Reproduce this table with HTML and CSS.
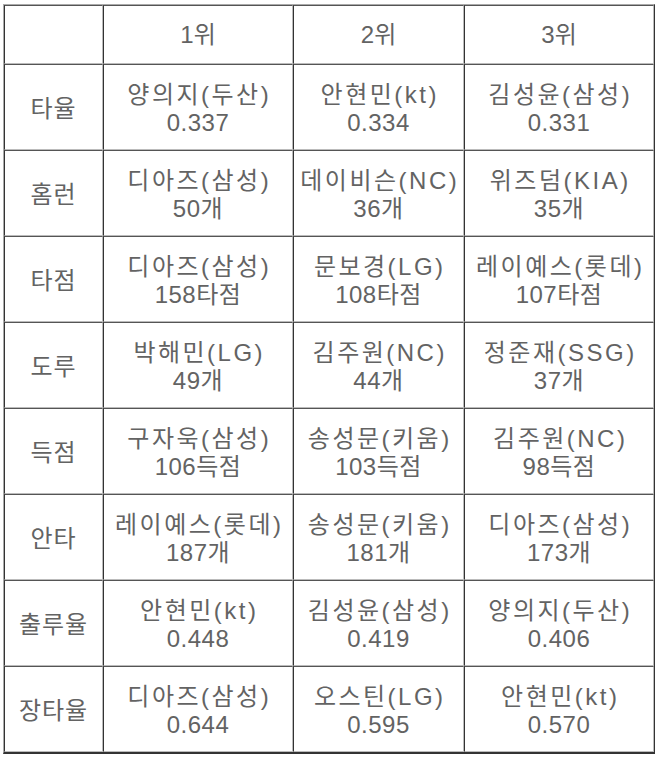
FILE: index.html
```html
<!DOCTYPE html>
<html lang="ko">
<head>
<meta charset="utf-8">
<link rel="stylesheet" href="styles.css">
</head>
<body>
<table class="rank">
  <colgroup>
    <col class="c-label"><col class="c-1"><col class="c-2"><col class="c-3">
  </colgroup>
  <tr class="head"><td></td><td>1위</td><td>2위</td><td>3위</td></tr>
  <tr><td class="lb">타율</td><td><span class="nm">양의지(두산)</span><span class="vl">0.337</span></td><td><span class="nm">안현민(kt)</span><span class="vl">0.334</span></td><td><span class="nm">김성윤(삼성)</span><span class="vl">0.331</span></td></tr>
  <tr><td class="lb">홈런</td><td><span class="nm">디아즈(삼성)</span><span class="vl">50개</span></td><td><span class="nm">데이비슨(NC)</span><span class="vl">36개</span></td><td><span class="nm">위즈덤(KIA)</span><span class="vl">35개</span></td></tr>
  <tr><td class="lb">타점</td><td><span class="nm">디아즈(삼성)</span><span class="vl">158타점</span></td><td><span class="nm">문보경(LG)</span><span class="vl">108타점</span></td><td><span class="nm">레이예스(롯데)</span><span class="vl">107타점</span></td></tr>
  <tr><td class="lb">도루</td><td><span class="nm">박해민(LG)</span><span class="vl">49개</span></td><td><span class="nm">김주원(NC)</span><span class="vl">44개</span></td><td><span class="nm">정준재(SSG)</span><span class="vl">37개</span></td></tr>
  <tr><td class="lb">득점</td><td><span class="nm">구자욱(삼성)</span><span class="vl">106득점</span></td><td><span class="nm">송성문(키움)</span><span class="vl">103득점</span></td><td><span class="nm">김주원(NC)</span><span class="vl">98득점</span></td></tr>
  <tr><td class="lb">안타</td><td><span class="nm">레이예스(롯데)</span><span class="vl">187개</span></td><td><span class="nm">송성문(키움)</span><span class="vl">181개</span></td><td><span class="nm">디아즈(삼성)</span><span class="vl">173개</span></td></tr>
  <tr><td class="lb">출루율</td><td><span class="nm">안현민(kt)</span><span class="vl">0.448</span></td><td><span class="nm">김성윤(삼성)</span><span class="vl">0.419</span></td><td><span class="nm">양의지(두산)</span><span class="vl">0.406</span></td></tr>
  <tr><td class="lb">장타율</td><td><span class="nm">디아즈(삼성)</span><span class="vl">0.644</span></td><td><span class="nm">오스틴(LG)</span><span class="vl">0.595</span></td><td><span class="nm">안현민(kt)</span><span class="vl">0.570</span></td></tr>
</table>
</body>
</html>
```

FILE: styles.css
```css
html, body {
  margin: 0;
  padding: 0;
  background: #fff;
}
body {
  padding: 4px 0 0 3px;
}
.rank {
  border-collapse: separate;
  border-spacing: 0;
  table-layout: fixed;
  width: 650px;
  border-style: solid;
  border-width: 1px 1px 2px 1px;
  border-color: #aaa #333 #333 #aaa;
  font-family: "Liberation Sans", "Noto Sans CJK KR", sans-serif;
  font-size: 24px;
  line-height: 28px;
  color: #636363;
}
.c-label { width: 99px; }
.c-1 { width: 190px; }
.c-2 { width: 171px; }
.c-3 { width: 190px; }
.rank td {
  text-align: center;
  vertical-align: middle;
  padding: 4px 0 0 0;
  border-style: solid;
  border-width: 1px;
  border-color: #555 #bbb #bbb #333;
  white-space: nowrap;
}
.rank tr.head td { padding-top: 1px; }
.rank tr { height: 86px; }
.rank tr.head { height: 59px; }
.nm {
  display: block;
  letter-spacing: 2.5px;
  margin-right: -2.5px;
}
.vl {
  display: block;
  letter-spacing: 0.5px;
}
.lb {
  letter-spacing: 1px;
}
```
